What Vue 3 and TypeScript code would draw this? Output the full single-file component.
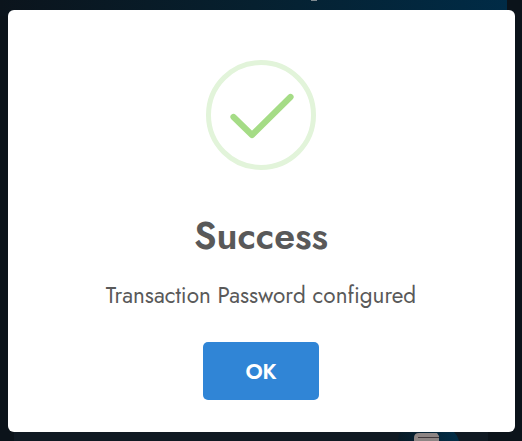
<script setup lang="ts">
import { ref } from 'vue'

const title = ref<string>('Success')
const message = ref<string>('Transaction Password configured')
</script>

<template>
  <div class="page">
    <div class="banner"><span class="glyph"></span></div>
    <div class="lower">
      <div class="orb">
        <svg width="62" height="9" viewBox="0 0 62 9">
          <defs>
            <linearGradient id="glow"><stop offset="0" stop-color="#081a26" /><stop offset="1" stop-color="#022d47" /></linearGradient>
          </defs>
          <path d="M2 0H56Q60 4 61 9H0Q0 4 2 0Z" fill="url(#glow)" />
          <path d="M16 9V6Q16 1 21 1H39L41 4V9Z" fill="#8d8584" />
          <path d="M20 5.5H41" stroke="#40383b" />
        </svg>
      </div>
    </div>
    <section class="modal" role="dialog" aria-modal="true">
      <svg class="icon" width="110" height="110" viewBox="0 0 110 110" fill="none">
        <circle cx="55" cy="55" r="52.5" stroke="#e2f4da" stroke-width="5" />
        <path d="M27.5 57L46 75L84.5 37" stroke="#a5dc86" stroke-width="6.2" stroke-linecap="round" stroke-linejoin="round" />
      </svg>
      <h2>{{ title }}</h2>
      <p>{{ message }}</p>
      <button type="button">OK</button>
    </section>
  </div>
</template>

<style>
body {
  background: #0b131a;
}
</style>

<style scoped>
.page {
  position: relative;
  box-sizing: border-box;
  width: 522px;
  height: 441px;
  padding: 10px 7px 9px 8px;
  overflow: hidden;
  background: #0b131a;
  font-family: Jost, Lato, sans-serif;
}
.banner {
  position: absolute;
  top: 0;
  left: 0;
  width: 507px;
  height: 16px;
  background: linear-gradient(90deg, #0b141c, #06202f 50%, #002b46);
}
.glyph {
  position: absolute;
  top: 0;
  left: 311px;
  width: 6px;
  height: 1px;
  background: #7f8a90;
}
.lower {
  position: absolute;
  left: 14px;
  right: 34px;
  bottom: 0;
  height: 9px;
  background: #101a23;
}
.orb {
  position: absolute;
  left: 384px;
  top: 0;
  height: 9px;
}
.orb svg {
  display: block;
}
.modal {
  position: relative;
  box-sizing: border-box;
  height: 422px;
  padding: 50px 1px 0 0;
  display: flex;
  flex-direction: column;
  align-items: center;
  background: #fff;
  border-radius: 6px;
}
.icon {
  flex: none;
}
h2 {
  margin: 41px 0 0;
  font-size: 37.5px;
  line-height: 50px;
  font-weight: 600;
  color: #595959;
}
p {
  margin: 20px 0 0;
  font-size: 22.5px;
  line-height: 28px;
  font-weight: 400;
  white-space: nowrap;
  color: #595959;
}
button {
  margin: 33px 0 0;
  width: 116px;
  height: 58px;
  padding: 1px 0 0;
  border: 0;
  border-radius: 5px;
  background: #3085d6;
  color: #fff;
  font: 600 21.25px/57px Jost, Lato, sans-serif;
}
</style>
